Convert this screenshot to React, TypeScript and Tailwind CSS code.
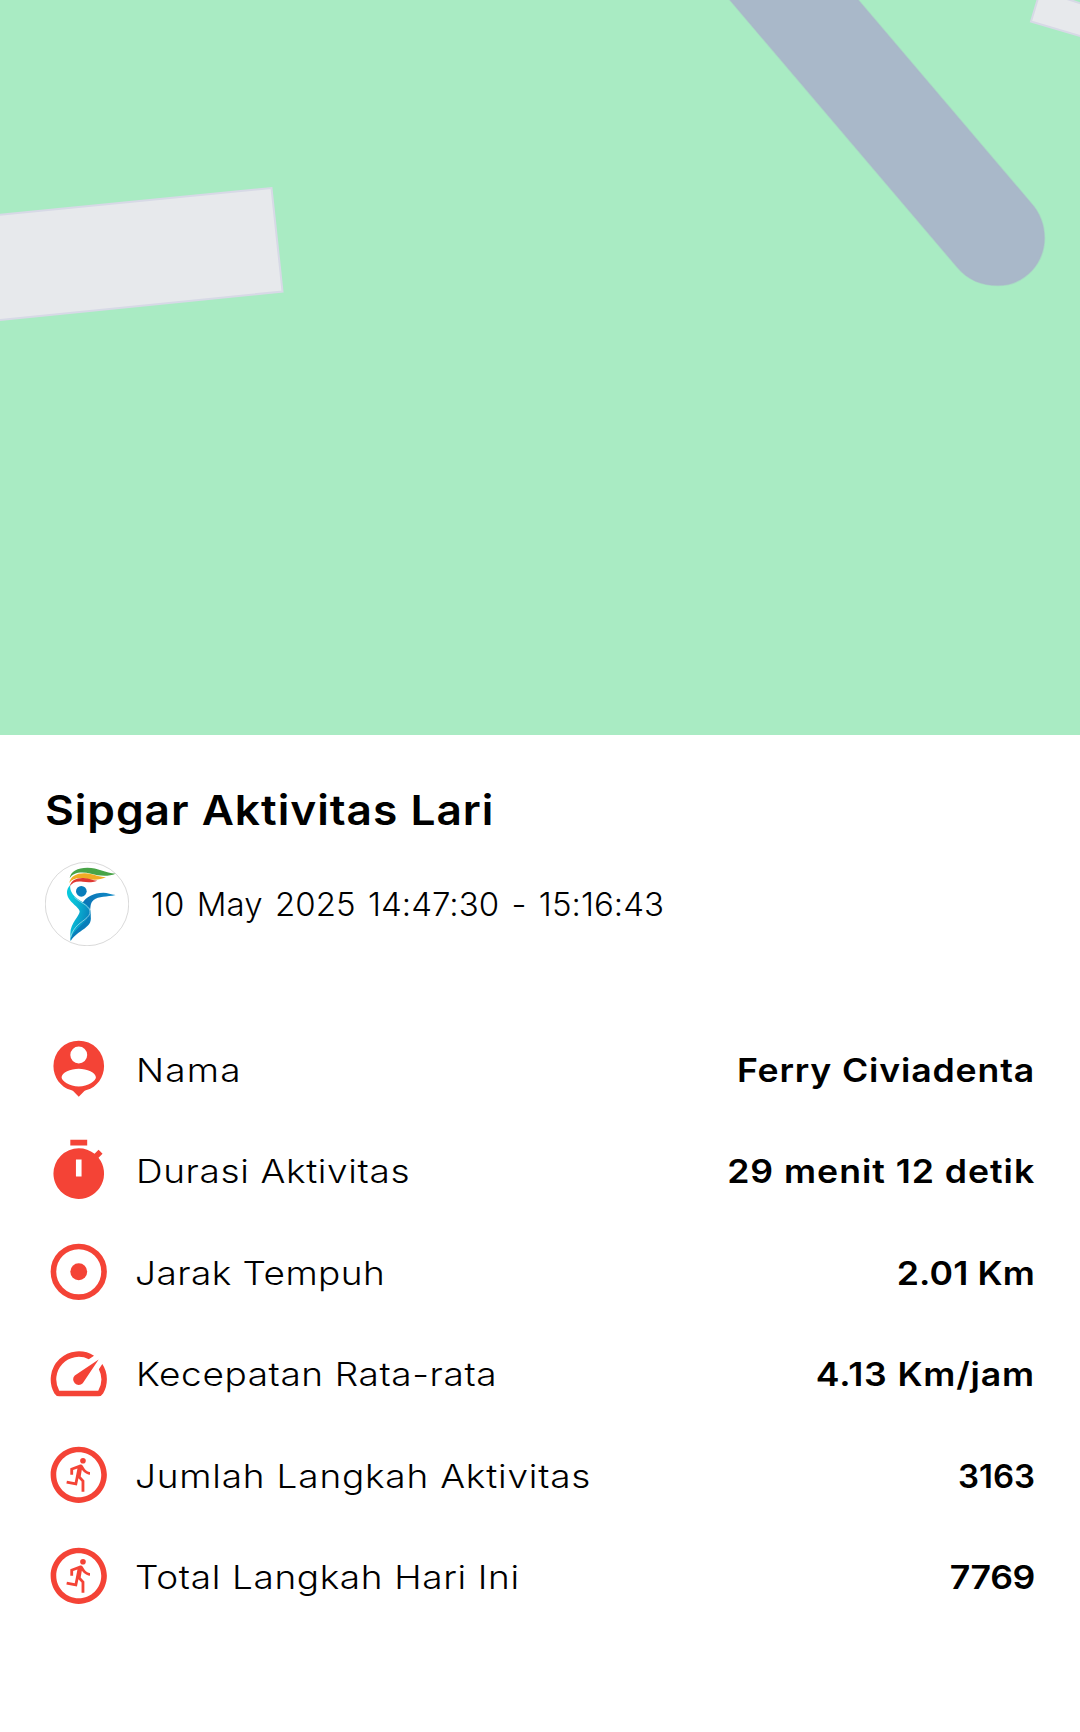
import type { ReactNode } from "react";
import { MdSpeed, MdTimer, MdOutlineRunCircle } from "react-icons/md";

function PersonPinIcon() {
  return (
    <svg viewBox="0 0 24 24" className="size-full" fill="currentColor">
      <path
        fillRule="evenodd"
        d="M12 2a9 9 0 0 0-9 9c0 4 2.5 7.5 6.2 8.55.4.1.6.2.8.4l2 2 2-2c.2-.2.4-.3.8-.4C18.5 18.5 21 15 21 11a9 9 0 0 0-9-9zm0 2.1a3 3 0 1 1 0 6 3 3 0 0 1 0-6zm0 7.9c2.9 0 6.1 1.4 6.1 3.05 0 1.35-2.8 3.3-6.1 3.3s-6.1-1.95-6.1-3.3C5.9 13.4 9.1 12 12 12z"
      />
    </svg>
  );
}

function TargetIcon() {
  return (
    <svg viewBox="0 0 24 24" className="size-full">
      <circle cx="12" cy="12" r="9" fill="none" stroke="currentColor" strokeWidth="2" />
      <circle cx="12" cy="12" r="3" fill="currentColor" />
    </svg>
  );
}

function Logo() {
  return (
    <svg viewBox="30 36 252 252" className="size-[84px] shrink-0">
      <defs>
        <linearGradient id="body" x1="98" y1="190" x2="168" y2="205" gradientUnits="userSpaceOnUse">
          <stop offset="0" stopColor="#08c8dc" />
          <stop offset="0.35" stopColor="#0ab4d2" />
          <stop offset="1" stopColor="#087dba" />
        </linearGradient>
        <linearGradient id="arm" x1="140" y1="170" x2="240" y2="130" gradientUnits="userSpaceOnUse">
          <stop offset="0" stopColor="#0a72b4" />
          <stop offset="1" stopColor="#108ac6" />
        </linearGradient>
      </defs>
      <circle cx="156" cy="162" r="125.3" fill="#fff" stroke="#c0c0c0" strokeWidth="1.8" />
      <path d="M104 85C106 64 128 53 157 53c32 0 54 15 85 18-22 9-50 7-74 0-30-8-55-3-64 14z" fill="#48a447" />
      <path d="M103 99c3-20 22-30 48-29 22 1 39 11 62 12-20 9-40 8-60 4-24-5-42 1-50 13z" fill="#f0ac25" />
      <path d="M104 109c4-18 20-26 42-25 16 1 26 7 41 8-16 6-30 5-44 3-19-3-32 3-39 14z" fill="#df3832" />
      <circle cx="139" cy="124" r="16" fill="#087dbb" />
      <path d="M141 161c12-21 35-33 64-33 13 0 23 6 37 7-27 6-51 3-66 15-8 7-9 14-10 27-6-8-15-12-25-16z" fill="url(#arm)" />
      <path d="M106 105c-14 13-12 31-2 44 12 16 29 25 30 35 1 13-28 35-28 67v22c13-31 58-49 61-80 4-30-27-34-45-51-14-13-18-25-16-37z" fill="url(#body)" />
      <path d="M107 273c0-33 53-53 58-83 7 22 0 34-17 46-16 11-31 20-41 37z" fill="#087dba" />
      <path d="M118 141c13 15 43 23 47 42 3 20-29 31-43 49-8 10-13 20-15 30" fill="none" stroke="#d7f2fa" strokeWidth="1.8" />
    </svg>
  );
}

type Row = {
  icon: ReactNode;
  label: string;
  labelClass: string;
  value: string;
  valueClass: string;
};

const rows: Row[] = [
  {
    icon: <PersonPinIcon />,
    label: "Nama",
    labelClass: "tracking-[1.07px]",
    value: "Ferry Civiadenta",
    valueClass: "scale-x-108 tracking-[0.78px] -mr-[0.3px]",
  },
  {
    icon: <MdTimer className="size-full" />,
    label: "Durasi Aktivitas",
    labelClass: "tracking-[0.57px]",
    value: "29 menit 12 detik",
    valueClass: "scale-x-108 tracking-[0.89px] -mr-[0.3px]",
  },
  {
    icon: <TargetIcon />,
    label: "Jarak Tempuh",
    labelClass: "tracking-[0.4px] -ml-px",
    value: "2.01 Km",
    valueClass: "scale-x-108 tracking-[0.12px]",
  },
  {
    icon: <MdSpeed className="size-full" />,
    label: "Kecepatan Rata-rata",
    labelClass: "tracking-[0.55px]",
    value: "4.13 Km/jam",
    valueClass: "scale-x-108 tracking-[0.78px] -mr-[0.3px]",
  },
  {
    icon: <MdOutlineRunCircle className="size-full" />,
    label: "Jumlah Langkah Aktivitas",
    labelClass: "tracking-[0.71px] -ml-px",
    value: "3163",
    valueClass: "",
  },
  {
    icon: <MdOutlineRunCircle className="size-full" />,
    label: "Total Langkah Hari Ini",
    labelClass: "tracking-[0.57px] -ml-px",
    value: "7769",
    valueClass: "scale-x-108 tracking-[-0.33px]",
  },
];

function MapView() {
  return (
    <svg viewBox="0 0 1080 735" className="block h-[735px] w-full bg-[#a9ebc3]">
      <path
        d="M729 -1L957 267C968 280 981 285.5 998 285.5C1024 285.5 1044.500 264 1044.500 238C1044.500 225 1040 213 1031 203L857.500 -1Z"
        fill="#a9b8c9"
        stroke="#a9b8c9"
        strokeOpacity="0.4"
        strokeWidth="1.5"
      />
      <g fill="#e7e9ec" stroke="#d7d9e6" strokeWidth="2">
        <path d="M-10 215.8L271.5 188L282.5 291.5L-10 321z" />
        <path d="M1042 -15L1031 21.5L1090 39L1090 6.5L1064 -2z" />
      </g>
    </svg>
  );
}

export default function App() {
  return (
    <main className="flex h-[1732px] w-[1080px] flex-col overflow-hidden bg-white font-[Inter,sans-serif] text-black">
      <MapView />
      <section className="px-[45px] pt-[50px]">
        <h1 className="h-[50px] origin-left scale-x-108 text-[41px] leading-[50px] font-semibold tracking-[0.9px] whitespace-nowrap">
          Sipgar Aktivitas Lari
        </h1>
        <div className="mt-[27px] flex items-center gap-[22px]">
          <Logo />
          <p className="text-[33px] leading-10 font-light tracking-[0.05px] whitespace-nowrap [word-spacing:3px]">
            10 May 2025 14:47:30 - 15:16:43
          </p>
        </div>
        <ul className="mt-[72.4px]">
          {rows.map((row) => (
            <li key={row.label} className="flex h-[101.4px] items-center text-[33px] leading-10">
              <span className="mr-[23px] size-[67.5px] shrink-0 text-[#f44336]">{row.icon}</span>
              <span className="flex flex-1 items-center justify-between pt-[2px] whitespace-nowrap">
                <span className={`origin-left scale-x-112 font-light ${row.labelClass}`}>{row.label}</span>
                <span className={`origin-right font-semibold ${row.valueClass}`}>{row.value}</span>
              </span>
            </li>
          ))}
        </ul>
      </section>
    </main>
  );
}
